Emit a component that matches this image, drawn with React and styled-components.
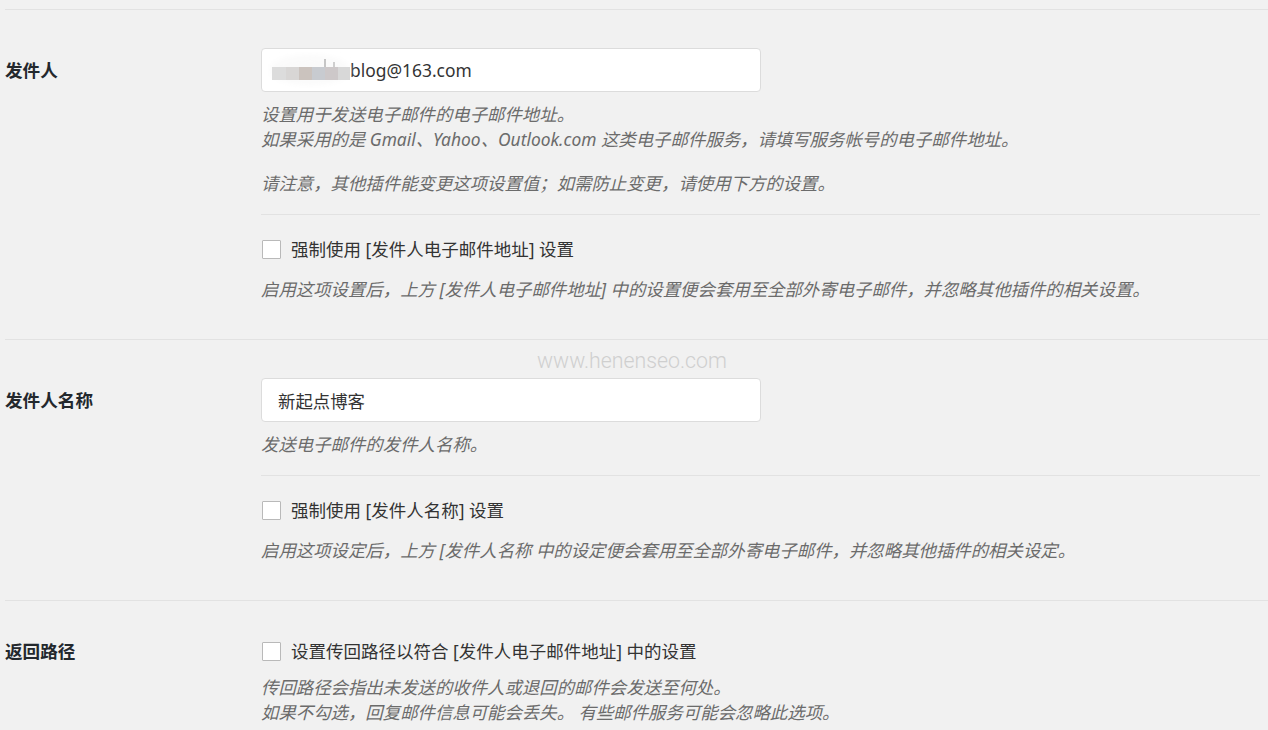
import React from 'react';
import styled, { createGlobalStyle } from 'styled-components';

const GlobalStyle = createGlobalStyle`
  body {
    margin: 0;
    background: #f1f1f1;
    font-family: "Noto Sans", "Noto Sans CJK SC", sans-serif;
  }
`;

const Page = styled.div`
  position: relative;
  padding: 9px 0 0 5px;
  min-height: 721px;
  overflow: hidden;
`;

const Section = styled.section`
  display: grid;
  grid-template-columns: 256px 1fr;
  border-top: 1px solid #e2e2e2;
  padding: 38px 0 37px;
`;

const FieldLabel = styled.div`
  padding-top: ${({ $offset }) => $offset}px;
  font-size: 17.6px;
  line-height: 25px;
  font-weight: 700;
  color: #23282d;
`;

const Field = styled.div`
  padding-right: 8px;
`;

const InputWrap = styled.div`
  position: relative;
  width: 500px;
`;

const TextInput = styled.input`
  display: block;
  box-sizing: border-box;
  width: 500px;
  height: 44px;
  margin: 0;
  padding: 0 16px 0 ${({ $indent }) => $indent || 16}px;
  border: 1px solid #dcdcdc;
  border-radius: 4px;
  background: #fff;
  font-family: inherit;
  font-size: 17.4px;
  color: #333;
  outline: none;
`;

const Mosaic = styled.svg`
  position: absolute;
  left: 7px;
  top: 4px;
  pointer-events: none;
`;

const Description = styled.p`
  margin: ${({ $gap }) => $gap ?? 10}px 0 0;
  font-size: 17.4px;
  line-height: 25px;
  font-style: italic;
  color: #6b6b6b;
`;

const Divider = styled.div`
  margin-top: 18px;
  border-top: 1px solid #e2e2e2;
`;

const CheckRow = styled.label`
  display: flex;
  align-items: center;
  gap: 10px;
  margin-top: ${({ $first }) => ($first ? 0 : 22)}px;
  font-size: 17.5px;
  line-height: 25px;
  color: #333;
`;

const Checkbox = styled.input.attrs({ type: 'checkbox' })`
  appearance: none;
  box-sizing: border-box;
  width: 19px;
  height: 19px;
  margin: 0 0 0 1px;
  border: 1px solid #b9b9b9;
  border-radius: 1px;
  background: #fff;
`;

const Watermark = styled.div`
  position: absolute;
  left: 537px;
  top: 348px;
  font-family: Roboto, "Noto Sans", sans-serif;
  font-weight: 300;
  font-size: 21.3px;
  line-height: 25px;
  color: #cfcfcf;
`;

function Blur() {
  return (
    <Mosaic width="88" height="36" viewBox="0 0 88 36">
      <defs>
        <filter id="soft" x="-20%" y="-40%" width="140%" height="180%">
          <feGaussianBlur stdDeviation="3" />
        </filter>
      </defs>
      <ellipse cx="42" cy="18" rx="40" ry="15" fill="#fafafa" filter="url(#soft)" />
      <rect x="4" y="15" width="14" height="13" fill="#dcdcdc" />
      <rect x="18" y="15" width="13" height="13" fill="#d8d6d5" />
      <rect x="31" y="15" width="13" height="13" fill="#cbc3be" />
      <rect x="44" y="15" width="13" height="13" fill="#c8cbd0" />
      <rect x="57" y="15" width="13" height="13" fill="#cdc8c9" />
      <rect x="70" y="15" width="12" height="13" fill="#d8d8d8" />
      <rect x="56" y="7" width="2" height="8" fill="#9a9a9a" opacity="0.55" />
      <rect x="65" y="10" width="2" height="5" fill="#9a9a9a" opacity="0.45" />
    </Mosaic>
  );
}

export default function App() {
  return (
    <>
      <GlobalStyle />
      <Page>
        <Section>
          <FieldLabel $offset={10}>发件人</FieldLabel>
          <Field>
            <InputWrap>
              <TextInput $indent={88} defaultValue="blog@163.com" />
              <Blur />
            </InputWrap>
            <Description>
              设置用于发送电子邮件的电子邮件地址。
              <br />
              如果采用的是 Gmail、Yahoo、Outlook.com 这类电子邮件服务，请填写服务帐号的电子邮件地址。
            </Description>
            <Description $gap={19}>请注意，其他插件能变更这项设置值；如需防止变更，请使用下方的设置。</Description>
            <Divider />
            <CheckRow>
              <Checkbox />
              强制使用 [发件人电子邮件地址] 设置
            </CheckRow>
            <Description $gap={15}>
              启用这项设置后，上方 [发件人电子邮件地址] 中的设置便会套用至全部外寄电子邮件，并忽略其他插件的相关设置。
            </Description>
          </Field>
        </Section>

        <Section>
          <FieldLabel $offset={10}>发件人名称</FieldLabel>
          <Field>
            <InputWrap>
              <TextInput defaultValue="新起点博客" />
            </InputWrap>
            <Description>发送电子邮件的发件人名称。</Description>
            <Divider />
            <CheckRow>
              <Checkbox />
              强制使用 [发件人名称] 设置
            </CheckRow>
            <Description $gap={15}>
              启用这项设定后，上方 [发件人名称 中的设定便会套用至全部外寄电子邮件，并忽略其他插件的相关设定。
            </Description>
          </Field>
        </Section>

        <Section>
          <FieldLabel $offset={0}>返回路径</FieldLabel>
          <Field>
            <CheckRow $first>
              <Checkbox />
              设置传回路径以符合 [发件人电子邮件地址] 中的设置
            </CheckRow>
            <Description $gap={11}>
              传回路径会指出未发送的收件人或退回的邮件会发送至何处。
              <br />
              如果不勾选，回复邮件信息可能会丢失。 有些邮件服务可能会忽略此选项。
            </Description>
          </Field>
        </Section>

        <Watermark>www.henenseo.com</Watermark>
      </Page>
    </>
  );
}
